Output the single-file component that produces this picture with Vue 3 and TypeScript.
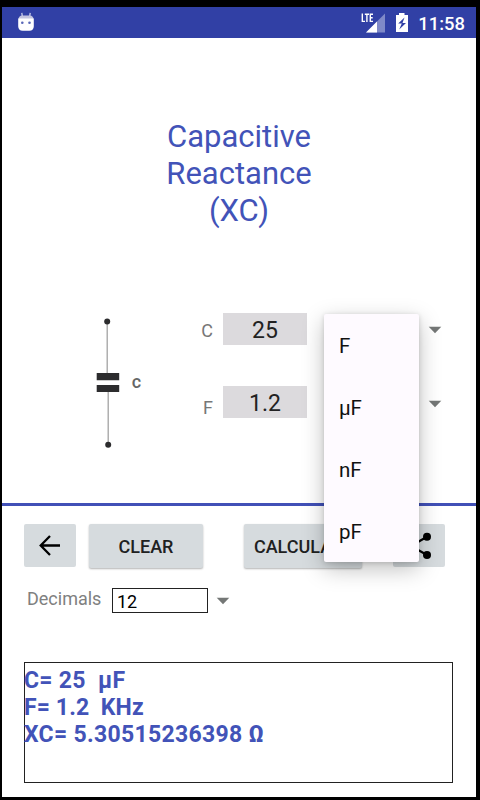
<script setup lang="ts">
import { ref } from 'vue'

const units: string[] = ['F', 'µF', 'nF', 'pF']
const fields = ref([
  { label: 'C', value: '25' },
  { label: 'F', value: '1.2' },
])
const decimals = ref('12')
const results = ref(['C= 25  µF', 'F= 1.2  KHz', 'XC= 5.30515236398 Ω'])
const menuOpen = ref(true)
</script>

<template>
  <div class="device">
    <main class="screen">
      <header class="status">
        <svg class="robot" width="18" height="21" viewBox="0 0 18 21">
          <path d="M4.800 .8l.6 4M13.200 .8l-.6 4" stroke="#c9cdea" stroke-width="1.300" />
          <path d="M1.500 7q.5-3.500 3.500-3.500h8q3 0 3.500 3.500z" fill="#c3c4df" />
          <path d="M1.200 6.500h15.600v7.500q0 4.700-4.500 4.700H5.700q-4.500 0-4.500-4.700z" fill="#fff" />
          <circle cx="5.300" cy="10.800" r="1.300" fill="#5967b8" />
          <circle cx="12.500" cy="10.800" r="1.300" fill="#5967b8" />
        </svg>
        <div class="indicators">
          <svg width="26" height="21" viewBox="0 0 26 21">
            <path d="M26 1.500v19H7z" fill="#7f89c8" />
            <path d="M18 9.500v11H7z" fill="#fff" />
            <path d="M3.300 1.500v7.900h2.700M5.800 2.200h4.200M7.900 2.200v7.900M14 2.200h-2.700v7.200H14M11.300 5.700h2.400" fill="none" stroke="#fff" stroke-width="1.400" />
          </svg>
          <svg class="battery" width="14" height="21" viewBox="0 0 14 21">
            <path d="M1 3h3V1h5.500v2H13v17H1z" fill="#fff" />
            <path d="M9.500 5.500L3.200 11.500h3.600L4.200 17.500l6.800-6.500H7.500z" fill="#3140a5" />
          </svg>
          <span class="clock">11:58</span>
        </div>
      </header>

      <h1 class="title">Capacitive<br />Reactance<br />(XC)</h1>

      <section class="inputs">
        <svg class="capacitor" width="52" height="132" viewBox="0 0 52 132">
          <path d="M15.200 5v53M16.200 75v53" stroke="#a3a3a3" stroke-width="1.300" />
          <circle cx="15.200" cy="5.500" r="3" fill="#2c2c2e" />
          <circle cx="16.200" cy="128.700" r="3" fill="#2c2c2e" />
          <path d="M4.700 57h22.500v7.300H4.700zM4.700 69h22.500v7H4.700z" fill="#2c2c2e" />
          <text x="39.700" y="72" class="cap-label">c</text>
        </svg>
        <div class="fields">
          <div v-for="field in fields" :key="field.label" class="field">
            <label>{{ field.label }}</label>
            <div class="value">{{ field.value }}</div>
            <svg class="caret" width="14" height="8" viewBox="0 0 14 8"><path d="M.7.800h12.600L7 7.300z" fill="#747776" /></svg>
          </div>
        </div>
      </section>

      <hr class="divider" />

      <nav class="actions">
        <button class="btn icon" aria-label="Back">
          <svg width="24" height="24" viewBox="0 0 24 24"><path d="M22 11.500H3M12 2L2.700 11.500l9.300 9.500" fill="none" stroke="#000" stroke-width="2.300" /></svg>
        </button>
        <button class="btn clear">CLEAR</button>
        <button class="btn calculate">CALCULATE</button>
        <button class="btn icon share" aria-label="Share">
          <svg width="28" height="30" viewBox="0 0 28 30"><path d="M22 5.800L6 15l16 9" fill="none" stroke="#000" stroke-width="2.200" /><circle cx="22" cy="5.800" r="4" /><circle cx="6" cy="15" r="4" /><circle cx="22" cy="24" r="4" /></svg>
        </button>
      </nav>

      <section class="decimals">
        <span>Decimals</span>
        <div class="decimal-value">{{ decimals }}</div>
        <svg class="decimal-caret" width="14" height="8" viewBox="0 0 14 8"><path d="M.7.800h12.600L7 7.300z" fill="#747776" /></svg>
      </section>

      <section class="results">
        <div v-for="line in results" :key="line">{{ line }}</div>
      </section>

      <ul v-if="menuOpen" class="menu">
        <li v-for="unit in units" :key="unit">{{ unit }}</li>
      </ul>
    </main>
  </div>
</template>

<style>
body {
  margin: 0;
  background: #000;
}
</style>

<style scoped>
.device {
  box-sizing: border-box;
  width: 480px;
  height: 800px;
  padding: 7px 4px 3px 2px;
  background: #000;
  font-family: Roboto, "Liberation Sans", sans-serif;
  overflow: hidden;
}
.screen {
  position: relative;
  display: flex;
  flex-direction: column;
  height: 790px;
  background: #fff;
}
.status {
  display: flex;
  flex: none;
  box-sizing: border-box;
  height: 31px;
  padding: 5px 11px 0 15px;
  justify-content: space-between;
  align-items: flex-start;
  background: #3140a5;
}
.indicators {
  display: flex;
  align-items: flex-start;
}
.battery {
  margin-left: 10px;
}
.clock {
  margin-left: 9px;
  color: #fff;
  font-size: 18.400px;
  font-weight: 500;
  line-height: 23px;
}
.title {
  flex: none;
  height: 111px;
  margin: 80px 0 0;
  color: #4253b8;
  font-size: 31px;
  font-weight: 400;
  line-height: 37px;
  text-align: center;
}
.inputs {
  display: flex;
  flex: none;
  height: 190px;
  margin-top: 84px;
  padding-left: 90px;
}
.capacitor {
  flex: none;
  margin-top: 3px;
  overflow: visible;
}
.cap-label {
  fill: #666;
  font-size: 18px;
  font-weight: 500;
}
.fields {
  display: flex;
  flex-direction: column;
  gap: 41px;
  margin-left: 51px;
}
.field {
  display: grid;
  grid-template-columns: 28px 84px 14px;
  grid-template-rows: 32px;
  height: 32px;
}
.field label {
  width: 18px;
  color: #777;
  font-size: 18px;
  line-height: 36px;
  text-align: right;
}
.field:last-child label {
  line-height: 43px;
}
.value {
  height: 32px;
  background: #dcdadd;
  color: #222;
  font-size: 23px;
  line-height: 36px;
  text-align: center;
}
.caret {
  margin: 13px 0 0 121px;
}
.field:last-child .caret {
  margin-top: 14px;
}
.divider {
  flex: none;
  width: 100%;
  height: 3px;
  margin: 0;
  border: 0;
  background: #4150b7;
}
.actions {
  display: flex;
  flex: none;
  height: 44px;
  margin-top: 18px;
  padding-left: 22px;
  align-items: flex-start;
}
.btn {
  flex: none;
  height: 44px;
  padding: 0;
  border: 0;
  border-radius: 2px;
  background: #d6dbde;
  box-shadow: 0 1px 2px rgba(0, 0, 0, 0.3);
  color: #20211f;
  font-family: inherit;
  font-size: 18px;
  font-weight: 500;
}
.icon {
  display: flex;
  width: 52px;
  height: 43px;
  align-items: center;
  justify-content: center;
  box-shadow: none;
}
.clear {
  width: 114px;
  margin-left: 13px;
}
.calculate {
  width: 118px;
  margin-left: 41px;
}
.share {
  margin-left: 31px;
}
.decimals {
  display: flex;
  flex: none;
  height: 25px;
  margin-top: 20px;
  padding-left: 25px;
  color: #808080;
  font-size: 18px;
  line-height: 21px;
}
.decimals span {
  width: 85px;
}
.decimal-value {
  box-sizing: border-box;
  width: 96px;
  height: 25px;
  padding-left: 4px;
  border: 1px solid #222;
  color: #000;
  font-size: 18px;
  line-height: 26px;
}
.decimal-caret {
  margin: 9px 0 0 8px;
}
.results {
  box-sizing: border-box;
  flex: none;
  width: 429px;
  height: 121px;
  margin: 49px 0 0 22px;
  padding-top: 4px;
  border: 1px solid #222;
  color: #4253b8;
  font-size: 23px;
  font-weight: 700;
  letter-spacing: 0.300px;
  line-height: 27px;
  white-space: pre;
}
.results div {
  margin-left: -1px;
}
.results div:nth-child(2) {
  letter-spacing: 0.100px;
}
.menu {
  position: absolute;
  top: 307px;
  left: 322px;
  box-sizing: border-box;
  width: 95px;
  height: 248px;
  margin: 0;
  padding: 1px 0 0;
  border-radius: 2px;
  background: #fefaff;
  box-shadow: 0 7px 22px rgba(0, 0, 0, 0.25), 0 1px 5px rgba(0, 0, 0, 0.15);
  color: #111;
  font-size: 20.500px;
  line-height: 62px;
  list-style: none;
}
.menu li {
  padding-left: 15px;
}
</style>
